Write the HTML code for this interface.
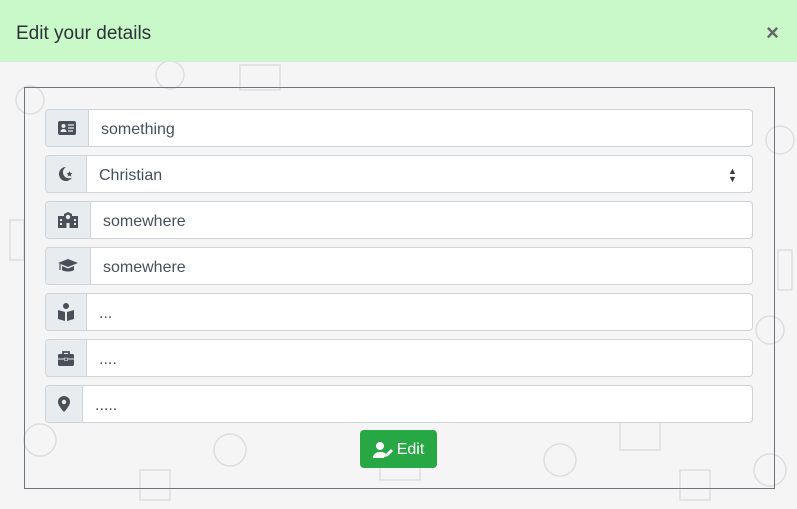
<!DOCTYPE html>
<html><head><style>
*{box-sizing:border-box;margin:0;padding:0}
body{width:797px;height:509px;overflow:hidden;background:#f5f5f5;font-family:"Liberation Sans",sans-serif;position:relative}
.hdr{position:absolute;left:0;top:0;width:797px;height:62px;background:#c9f8c9;border-bottom:1px solid #d8e8d8}
.hdr h5{position:absolute;left:16px;top:23px;font-size:19px;font-weight:400;color:#2d3338}
.x{position:absolute;right:18px;top:20px;font-size:22px;font-weight:700;color:#666}
.box{position:absolute;left:24px;top:87px;width:751px;height:402px;border:1px solid #6c757d}
.row{position:absolute;left:45px;width:708px;height:38px;display:flex;border:1px solid #ced4da;border-radius:4px;background:#fff;overflow:hidden}
.ad{background:#e9ecef;border-right:1px solid #ced4da;display:flex;align-items:center;justify-content:center;flex:none}
.tx{padding-left:12px;padding-top:2px;line-height:36px;font-size:16px;color:#495057}
.btn{position:absolute;left:360px;top:430px;width:77px;height:38px;background:#28a745;border-radius:4px;color:#fff;font-size:16px;display:flex;align-items:center;justify-content:center;gap:4px;padding-top:2px}
svg.bg{position:absolute;left:0;top:0}
</style></head><body>
<svg class="bg" width="797" height="509" fill="none" stroke="#dedede" stroke-width="1.5">
<circle cx="30" cy="100" r="14"/><circle cx="170" cy="75" r="14"/><circle cx="780" cy="140" r="14"/><circle cx="312" cy="20" r="14"/><circle cx="470" cy="20" r="12"/><circle cx="770" cy="330" r="14"/><circle cx="40" cy="440" r="16"/><circle cx="770" cy="470" r="16"/><circle cx="230" cy="450" r="16"/><circle cx="560" cy="460" r="16"/>
<rect x="240" y="65" width="40" height="25"/><rect x="380" y="450" width="40" height="30"/><rect x="620" y="420" width="40" height="30"/><rect x="10" y="220" width="14" height="40"/><rect x="778" y="250" width="14" height="40"/><rect x="140" y="470" width="30" height="30"/><rect x="680" y="470" width="30" height="30"/>
</svg>
<div class="hdr"><h5>Edit your details</h5><div class="x">×</div></div>
<div class="box"></div>
<div class="row" style="top:109px"><div class="ad" style="width:43px"><svg width="18" height="14" viewBox="0 0 18 14"><rect width="18" height="14" rx="2" fill="#495057"/><circle cx="5.5" cy="5" r="2" fill="#e9ecef"/><path d="M2.5 11c0-2 1.5-3 3-3s3 1 3 3z" fill="#e9ecef"/><path d="M10 4h6M10 7h6M10 10h5" stroke="#e9ecef" stroke-width="1.3"/></svg></div><div class="tx">something</div></div>
<div class="row" style="top:155px"><div class="ad" style="width:41px"><svg width="16" height="16" viewBox="0 0 16 16"><path d="M8 1a7 7 0 1 0 6 10.5A5.5 5.5 0 1 1 8 1z" fill="#495057"/><path d="M11.5 5l.9 1.9 2 .3-1.5 1.4.4 2-1.8-1-1.8 1 .4-2-1.5-1.4 2-.3z" fill="#495057"/></svg></div><div class="tx" style="flex:1">Christian</div><div style="width:24px;font-size:9px;line-height:8px;color:#343a40;padding-top:11px">▲<br>▼</div></div>
<div class="row" style="top:201px"><div class="ad" style="width:45px"><svg width="20" height="16" viewBox="0 0 20 16"><path d="M0 4h6V2l4-2 4 2v2h6v12H0z" fill="#495057"/><circle cx="10" cy="5" r="2.2" fill="#e9ecef"/><rect x="2" y="7" width="2" height="2" fill="#e9ecef"/><rect x="16" y="7" width="2" height="2" fill="#e9ecef"/><rect x="2" y="11" width="2" height="2" fill="#e9ecef"/><rect x="16" y="11" width="2" height="2" fill="#e9ecef"/><rect x="8.5" y="11" width="3" height="5" fill="#e9ecef"/></svg></div><div class="tx">somewhere</div></div>
<div class="row" style="top:247px"><div class="ad" style="width:45px"><svg width="20" height="14" viewBox="0 0 20 14"><path d="M10 0l10 4-10 4L0 4z" fill="#495057"/><path d="M4 7v4c2 2 10 2 12 0V7l-6 2.5z" fill="#495057"/><path d="M2 5v6" stroke="#495057" stroke-width="1.2"/></svg></div><div class="tx">somewhere</div></div>
<div class="row" style="top:293px"><div class="ad" style="width:41px"><svg width="16" height="18" viewBox="0 0 16 18"><circle cx="8" cy="3" r="3" fill="#495057"/><path d="M0 7l7 2v9l-7-2zM16 7l-7 2v9l7-2z" fill="#495057"/></svg></div><div class="tx">...</div></div>
<div class="row" style="top:339px"><div class="ad" style="width:41px"><svg width="16" height="15" viewBox="0 0 16 15"><path d="M5 3V1h6v2" stroke="#495057" stroke-width="1.8" fill="none"/><rect y="3" width="16" height="12" rx="1.5" fill="#495057"/><path d="M0 8h16" stroke="#e9ecef" stroke-width="1"/><rect x="6.5" y="7" width="3" height="2.5" fill="#495057" stroke="#e9ecef" stroke-width=".6"/></svg></div><div class="tx">....</div></div>
<div class="row" style="top:385px"><div class="ad" style="width:37px"><svg width="12" height="16" viewBox="0 0 12 16"><path d="M6 0a6 6 0 0 1 6 6c0 4-6 10-6 10S0 10 0 6a6 6 0 0 1 6-6z" fill="#495057"/><circle cx="6" cy="6" r="2.2" fill="#e9ecef"/></svg></div><div class="tx">.....</div></div>
<div class="btn"><svg width="20" height="16" viewBox="0 0 20 16"><circle cx="7" cy="4" r="4" fill="#fff"/><path d="M0 16c0-4 3-6 7-6s5 1 6 2l-2 4z" fill="#fff"/><path d="M12 15l1-3 5-5 2 2-5 5z" fill="#fff"/></svg><span>Edit</span></div>
</body></html>
